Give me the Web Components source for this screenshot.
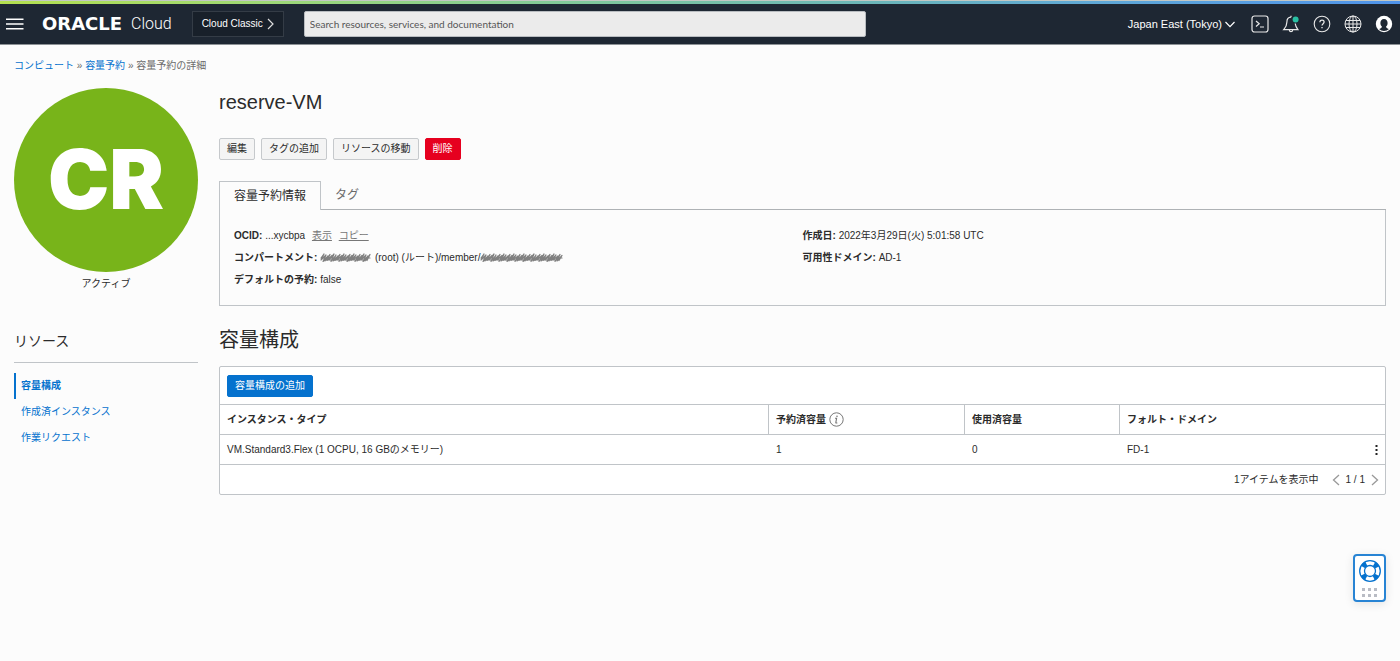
<!DOCTYPE html>
<html lang="ja">
<head>
<meta charset="utf-8">
<meta name="viewport" content="width=device-width, initial-scale=1">
<title>容量予約の詳細</title>
<style>
  html {
    --link: #0572ce;
    --text: #2b2b2b;
    --muted: #6b6b6b;
    --line: #c0c4c8;
    --page: #fcfcfc;
  }
  body {
    margin: 0;
    min-height: 100vh;
    background: var(--page);
    color: var(--text);
    font: 10px/16px "Liberation Sans", "Noto Sans CJK JP", sans-serif;
  }
</style>
</head>
<body>
<oc-header></oc-header>
<oc-page>
  <oc-breadcrumb slot="trail"></oc-breadcrumb>
  <oc-status slot="side" code="CR">アクティブ</oc-status>
  <oc-resources slot="side" heading="リソース"></oc-resources>
  <oc-actions name="reserve-VM">
    <oc-button>編集</oc-button>
    <oc-button>タグの追加</oc-button>
    <oc-button>リソースの移動</oc-button>
    <oc-button kind="danger">削除</oc-button>
  </oc-actions>
  <oc-tabs>
    <oc-details></oc-details>
  </oc-tabs>
  <oc-capacity heading="容量構成">
    <oc-button slot="toolbar" kind="primary">容量構成の追加</oc-button>
  </oc-capacity>
</oc-page>
<oc-support></oc-support>

<script>
const base = `
  *, *::before, *::after { box-sizing: border-box; }
  button, input { font: inherit; color: inherit; margin: 0; }
  button { cursor: pointer; background: none; border: 0; padding: 0; white-space: nowrap; }
  h1, h2, p, dl, dd, ul { margin: 0; padding: 0; }
  a { color: var(--link); text-decoration: none; }
  svg { display: block; flex: none; }
`;

function element(name, render) {
  customElements.define(name, class extends HTMLElement {
    constructor() {
      super();
      this.attachShadow({ mode: 'open' });
    }
    connectedCallback() {
      const template = document.createElement('template');
      template.innerHTML = `<style>${base}</style>` + render(this);
      this.shadowRoot.replaceChildren(template.content.cloneNode(true));
    }
  });
}

element('oc-header', () => `
  <style>
    :host { display: block; color: #fff; background: #1e2733; border-bottom: 1px solid #8d9296; }
    .stripe { height: 4px; border-top: 1px solid #c3c8c4;
      background: linear-gradient(90deg, #b4e04f 0%, #9dd878 20%, #7fc89c 42%, #6bb6b8 62%, #5fa8d6 78%, #4f93ea 100%); }
    .bar { display: flex; align-items: center; height: 40px; padding: 0 7px 0 6px; }
    .menu { margin-right: 18px; }
    .brand { display: flex; align-items: center; gap: 6px; color: #fff; line-height: 20px; }
    .brand b { font: bold 18px/20px "DejaVu Sans", sans-serif; width: 83px; }
    .brand span { font: 300 16px/20px Roboto, sans-serif; }
    .classic { display: flex; align-items: center; gap: 4px; height: 26px; margin-left: 20px; padding: 0 9px;
      border: 1px solid #343c46; background: #18202a; }
    .search { flex: 0 1 562px; margin-left: 20px; display: flex; }
    input { width: 100%; height: 26px; padding: 0 5px; border: 1px solid #b8bcc0; border-radius: 2px; background: #ebebeb;
      font: 10px/16px Lato, "Open Sans", sans-serif; color: #333; }
    input::placeholder { color: #555; opacity: 1; }
    .tools { display: flex; align-items: center; gap: 13px; margin-left: auto; }
    .region { display: flex; align-items: center; gap: 3px; font-size: 11px; margin-right: 3px; }
  </style>
  <div class="stripe"></div>
  <header class="bar">
    <button class="menu" aria-label="メニュー">
      <svg width="18" height="12" viewBox="0 0 18 12" stroke="#fff" stroke-width="1.5"><path d="M0 1.2h17.5M0 6h17.5M0 10.8h17.5"/></svg>
    </button>
    <a class="brand" href="#"><b>ORACLE</b><span>Cloud</span></a>
    <button class="classic">Cloud Classic
      <svg width="7" height="12" viewBox="0 0 7 12" fill="none" stroke="#ddd" stroke-width="1.2"><path d="M1 1l5 5-5 5"/></svg>
    </button>
    <label class="search"><input type="text" aria-label="Search" placeholder="Search resources, services, and documentation"></label>
    <div class="tools">
      <button class="region">Japan East (Tokyo)
        <svg width="10" height="7" viewBox="0 0 10 7" fill="none" stroke="#fff" stroke-width="1.2"><path d="M.5 1L5 5.7 9.500 1"/></svg>
      </button>
      <button aria-label="Cloud Shell">
        <svg width="18" height="18" viewBox="0 0 18 18" fill="none" stroke="#e8e8e8" stroke-width="1.2"><rect x="1" y="1" width="16" height="16" rx="2.500"/><path d="M5 6l3.200 2.800L5 11.500M9 12h4"/></svg>
      </button>
      <button aria-label="お知らせ">
        <svg width="18" height="18" viewBox="0 0 18 18" fill="none" stroke="#e8e8e8" stroke-width="1.2"><path d="M9 2.200C6 2.300 4.900 4.500 4.900 7c0 4-1.200 5.500-3.200 7.700h14.200c-1.500-2-2.400-3.700-2.700-6.200M9 2.200V.8M7.300 15c.2 2.300 3.200 2.300 3.400 0"/><circle cx="13.600" cy="4.600" r="3" fill="#29bfa3" stroke="none"/></svg>
      </button>
      <button aria-label="ヘルプ">
        <svg width="18" height="18" viewBox="0 0 18 18" fill="none" stroke="#e8e8e8" stroke-width="1.1"><circle cx="9" cy="9" r="7.800"/><path d="M6.900 7.200c0-2.900 4.300-2.700 4.200-.1 0 1.600-2.100 1.600-2.100 3.500M9 11.900v1.400" stroke-width="1.300"/></svg>
      </button>
      <button aria-label="言語">
        <svg width="18" height="18" viewBox="0 0 18 18" fill="none" stroke="#e8e8e8" stroke-width="1"><circle cx="9" cy="9" r="8"/><ellipse cx="9" cy="9" rx="4" ry="8"/><path d="M9 1v16M2 5.500h14M1 9h16M2 12.500h14"/></svg>
      </button>
      <button aria-label="プロファイル">
        <svg width="18" height="18" viewBox="0 0 18 18"><circle cx="9" cy="9" r="8.200" fill="#fff"/><path d="M9 4c-2.400 0-3.600 1.800-3.600 4.100 0 1.700.7 2.900 1.600 3.600-.2 1.100-1.400 1.700-3 2.400 2.800 2.500 7.200 2.500 10 0-1.600-.7-2.800-1.300-3-2.400.9-.7 1.600-1.900 1.600-3.600C12.600 5.800 11.400 4 9 4z" fill="#1e2733"/></svg>
      </button>
    </div>
  </header>
`);

element('oc-page', () => `
  <style>
    :host { display: block; padding: 13px 14px 40px; }
    .columns { display: grid; grid-template-columns: 184px minmax(0, 1fr); column-gap: 21px; margin-top: 14px; }
  </style>
  <slot name="trail"></slot>
  <div class="columns">
    <aside><slot name="side"></slot></aside>
    <main><slot></slot></main>
  </div>
`);

element('oc-breadcrumb', () => `
  <style>
    :host { display: block; color: var(--muted); }
  </style>
  <nav aria-label="パンくず"><a href="#">コンピュート</a> » <a href="#">容量予約</a> » 容量予約の詳細</nav>
`);

element('oc-status', host => `
  <style>
    :host { display: block; text-align: center; }
    .disc { display: flex; align-items: center; justify-content: center; aspect-ratio: 1; border-radius: 50%;
      background: #78b41a; color: #fff; font: 900 82px/84px Inter, sans-serif; }
    p { margin-top: 4px; }
  </style>
  <div class="disc">${host.getAttribute('code')}</div>
  <p><slot></slot></p>
`);

element('oc-resources', host => `
  <style>
    :host { display: block; margin-top: 37px; }
    h2 { font-size: 14px; line-height: 24px; font-weight: normal; padding-bottom: 9px; border-bottom: 1px solid var(--line); }
    ul { list-style: none; margin-top: 10px; }
    a { display: block; line-height: 26px; padding-left: 5px; border-left: 2px solid transparent; }
    a[aria-current] { font-weight: bold; border-color: var(--link); }
  </style>
  <h2>${host.getAttribute('heading')}</h2>
  <ul>
    <li><a href="#" aria-current="page">容量構成</a></li>
    <li><a href="#">作成済インスタンス</a></li>
    <li><a href="#">作業リクエスト</a></li>
  </ul>
`);

element('oc-button', () => `
  <style>
    :host { display: block; }
    button { display: block; height: 22px; padding: 0 7px; border: 1px solid #c6c9cc; border-radius: 2px; background: #f4f4f4; line-height: 20px; }
    :host([kind="danger"]) button { background: #e6001f; border-color: #e6001f; color: #fff; }
    :host([kind="primary"]) button { background: var(--link); border-color: var(--link); color: #fff; }
  </style>
  <button><slot></slot></button>
`);

element('oc-actions', host => `
  <style>
    :host { display: block; }
    h1 { font-size: 20px; line-height: 28px; font-weight: normal; }
    div { display: flex; flex-wrap: wrap; gap: 6px; margin-top: 22px; }
  </style>
  <h1>${host.getAttribute('name')}</h1>
  <div><slot></slot></div>
`);

element('oc-tabs', () => `
  <style>
    :host { display: block; margin-top: 21px; }
    .tabs { display: flex; }
    button { height: 29px; padding: 0 14px; font-size: 12px; line-height: 28px; color: var(--muted); border-bottom: 1px solid #aeb2b5; }
    button[aria-selected="true"] { color: var(--text); border: 1px solid var(--line); border-bottom: 0; }
    .rest { flex: 1; border-bottom: 1px solid #aeb2b5; }
    .panel { padding: 18px 14px 16px; border: 1px solid var(--line); border-top: 0; min-height: 96px; }
  </style>
  <div class="tabs" role="tablist">
    <button role="tab" aria-selected="true">容量予約情報</button>
    <button role="tab" aria-selected="false">タグ</button>
    <div class="rest"></div>
  </div>
  <div class="panel" role="tabpanel"><slot></slot></div>
`);

element('oc-scribble', host => {
  const width = Number(host.getAttribute('width'));
  let path = 'M1 6';
  for (let x = 1, i = 0; x < width - 4; x += 2, i++) {
    const top = 2 + (i * 7 % 5) / 2;
    const bottom = 8 + (i * 3 % 4) / 2;
    path += `L${x + 3} ${top}L${x} ${bottom}`;
  }
  path += `M2 6H${width - 2}M6 8H${width - 5}`;
  return `
  <style>
    :host { display: inline-block; vertical-align: middle; }
  </style>
  <svg width="${width}" height="12" viewBox="0 0 ${width} 12" fill="none" stroke="#808080" stroke-width="1.200" stroke-linejoin="round" stroke-linecap="round" aria-hidden="true"><path d="${path}"/></svg>
`;
});

element('oc-details', () => `
  <style>
    :host { display: grid; grid-template-columns: 1fr 1fr; }
    dl { display: flex; flex-direction: column; gap: 6px; }
    dl div { white-space: nowrap; }
    dt, dd { display: inline; }
    dt { font-weight: bold; }
    a { color: #777; text-decoration: underline; margin-left: 4px; }
  </style>
  <dl>
    <div><dt>OCID:</dt> <dd>...xycbpa <a href="#">表示</a> <a href="#">コピー</a></dd></div>
    <div><dt>コンパートメント:</dt> <dd><oc-scribble width="52"></oc-scribble> (root) (ルート)/member/<oc-scribble width="84"></oc-scribble></dd></div>
    <div><dt>デフォルトの予約:</dt> <dd>false</dd></div>
  </dl>
  <dl>
    <div><dt>作成日:</dt> <dd>2022年3月29日(火) 5:01:58 UTC</dd></div>
    <div><dt>可用性ドメイン:</dt> <dd>AD-1</dd></div>
  </dl>
`);

element('oc-capacity', host => `
  <style>
    :host { display: block; margin-top: 18px; }
    h2 { font-size: 20px; line-height: 32px; font-weight: normal; }
    .card { margin-top: 10px; background: #fff; border: 1px solid var(--line); border-radius: 2px; }
    .toolbar { display: flex; align-items: center; height: 37px; padding: 0 7px; }
    table { width: 100%; table-layout: fixed; border-collapse: separate; border-spacing: 0; }
    th, td { height: 30px; padding: 0 7px; text-align: left; border-top: 1px solid var(--line); }
    th + th { border-left: 1px solid var(--line); }
    td + td { padding-left: 8px; }
    .reserved { width: 196px; } .used { width: 155px; } .fault { width: 266px; }
    .with-icon, .with-menu { display: flex; align-items: center; gap: 3px; }
    .with-menu { justify-content: space-between; }
    .foot { display: flex; align-items: center; justify-content: flex-end; height: 30px; padding: 0 6px; border-top: 1px solid var(--line); }
    .pager { display: flex; align-items: center; gap: 6px; margin-left: 13px; }
  </style>
  <h2>${host.getAttribute('heading')}</h2>
  <section class="card">
    <div class="toolbar"><slot name="toolbar"></slot></div>
    <table>
      <colgroup><col><col class="reserved"><col class="used"><col class="fault"></colgroup>
      <thead><tr>
        <th>インスタンス・タイプ</th>
        <th><div class="with-icon">予約済容量
          <svg width="15" height="15" viewBox="0 0 15 15" fill="none" stroke="#777" stroke-width="1"><circle cx="7.500" cy="7.500" r="6.700"/><path d="M6 6.300h1.600L6.800 10.600c0 .7.800.5 1.500.1" stroke-width="1.100"/><circle cx="8" cy="4.200" r=".8" fill="#777" stroke="none"/></svg>
        </div></th>
        <th>使用済容量</th>
        <th>フォルト・ドメイン</th>
      </tr></thead>
      <tbody><tr>
        <td>VM.Standard3.Flex (1 OCPU, 16 GBのメモリー)</td>
        <td>1</td>
        <td>0</td>
        <td><div class="with-menu">FD-1
          <button aria-label="アクション"><svg width="3" height="12" viewBox="0 0 3 12" fill="#222"><path d="M.5 1h2v2h-2zM.5 5h2v2h-2zM.5 9h2v2h-2z"/></svg></button>
        </div></td>
      </tr></tbody>
    </table>
    <div class="foot">
      <span>1アイテムを表示中</span>
      <div class="pager">
        <button aria-label="前へ"><svg width="8" height="12" viewBox="0 0 8 12" fill="none" stroke="#999" stroke-width="1.300"><path d="M7 1L1.500 6 7 11"/></svg></button>
        <span>1 / 1</span>
        <button aria-label="次へ"><svg width="8" height="12" viewBox="0 0 8 12" fill="none" stroke="#999" stroke-width="1.300"><path d="M1 1l5.500 5L1 11"/></svg></button>
      </div>
    </div>
  </section>
`);

element('oc-support', () => `
  <style>
    :host { position: fixed; right: 14px; bottom: 59px; }
    button { display: flex; flex-direction: column; align-items: center; justify-content: center; gap: 5px; width: 33px; height: 48px;
      background: #fff; border: 2px solid #2884d4; border-radius: 4px; box-shadow: 0 2px 10px rgba(0, 0, 0, .1); }
  </style>
  <button aria-label="サポート">
    <svg width="24" height="24" viewBox="0 0 24 24" fill="none" stroke="#0572ce"><circle cx="12" cy="12" r="8" stroke-width="5" stroke-dasharray="4.600 7.966" stroke-dashoffset="-3.980"/><circle cx="12" cy="12" r="10.300" stroke-width="1.300"/><circle cx="12" cy="12" r="5.500" stroke-width="1.300"/></svg>
    <svg width="16" height="10" viewBox="0 0 16 10" fill="#b9bcc4"><path d="M0 0h3v3H0zM6 0h3v3H6zM12 0h3v3h-3zM0 6h3v3H0zM6 6h3v3H6zM12 6h3v3h-3z"/></svg>
  </button>
`);
</script>
</body>
</html>
